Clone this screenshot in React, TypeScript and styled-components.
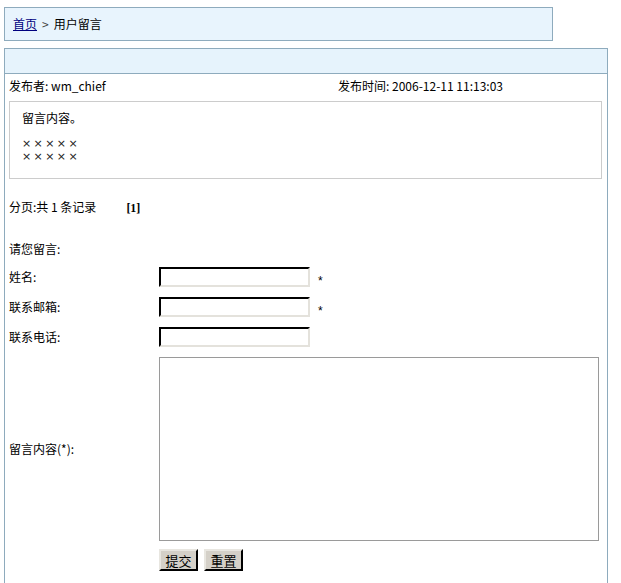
import React from 'react'
import styled, { createGlobalStyle } from 'styled-components'
// ______________________________________________________
//
const GlobalStyle = createGlobalStyle`
  body {
    margin: 0;
    background: #ffffff;
    font-family: "Noto Sans CJK SC", "Noto Sans", sans-serif;
    font-size: 12px;
    color: #000000;
  }
`
// ______________________________________________________
//
const Page = styled.div`
  padding: 7px 0 0 4px;
`

const Breadcrumb = styled.div`
  box-sizing: border-box;
  width: 549px;
  height: 34px;
  padding: 0 0 0 8px;
  display: flex;
  align-items: center;
  gap: 5px;
  background: #e8f4fd;
  border: 1px solid #8eabbd;
  line-height: 1;
`

const HomeLink = styled.a`
  color: #00007f;
  text-decoration: underline;
`

const Chevron = styled.span`
  color: #444444;
`

const Panel = styled.div`
  box-sizing: border-box;
  width: 604px;
  margin-top: 7px;
  border: 1px solid #8eabbd;
  border-bottom: none;
  min-height: 536px;
`

const PanelHead = styled.div`
  height: 24px;
  background: #e6f3fc;
  border-bottom: 1px solid #8eabbd;
`

const PanelBody = styled.div`
  padding: 0 4px;
`

const MetaRow = styled.div`
  display: grid;
  grid-template-columns: 329px 1fr;
  height: 22px;
  align-items: center;
`

const MessageBox = styled.div`
  box-sizing: border-box;
  width: 593px;
  height: 78px;
  margin-top: 5px;
  padding: 8px 12px;
  border: 1px solid #cccccc;
  line-height: 13px;
`

const MessageTitle = styled.div`
  margin-bottom: 13px;
  margin-top: 1px;
`

const Crosses = styled.div`
  font-family: "DejaVu Sans", sans-serif;
  font-size: 11px;
  line-height: 13px;
  letter-spacing: 2.4px;
  color: #222222;
`

const Pager = styled.div`
  margin-top: 21px;
  height: 14px;
  line-height: 14px;
  white-space: pre;
`

const PagerNum = styled.b`
  margin-left: 30px;
  font-family: "Liberation Serif", serif;
`

const Prompt = styled.div`
  margin-top: 28px;
  height: 14px;
  line-height: 14px;
`

const Form = styled.div`
  margin-top: 11px;
  display: grid;
  grid-template-columns: 150px 1fr;
  row-gap: 10px;
  align-items: center;
`

const Label = styled.div`
  line-height: 14px;
`

const Field = styled.div`
  display: flex;
  align-items: center;
  gap: 8px;
  min-height: 20px;
`

const TextInput = styled.input`
  box-sizing: border-box;
  width: 151px;
  height: 20px;
  margin: 0;
  border: 2px inset #e0ddd6;
  border-top-color: #4a4a4a;
  border-left-color: #4a4a4a;
  border-right-color: #e4e2dc;
  border-bottom-color: #e4e2dc;
  background: #ffffff;
`

const Star = styled.span`
  align-self: flex-end;
  font-family: "Liberation Sans", sans-serif;
  font-size: 12px;
  line-height: 11px;
`

const TextArea = styled.textarea`
  box-sizing: border-box;
  display: block;
  width: 440px;
  height: 184px;
  margin: 0;
  border: 1px solid #9a9a9a;
  resize: none;
  overflow-y: scroll;
  &::-webkit-scrollbar {
    width: 18px;
  }
  &::-webkit-scrollbar-track {
    background: #ececec;
  }
  &::-webkit-scrollbar-button:single-button {
    display: block;
    height: 18px;
    background: #f2f2f2;
    border: 1px solid #b8b8b8;
  }
`

const Buttons = styled.div`
  display: flex;
  gap: 6px;
  margin-top: 8px;
  padding-left: 150px;
`

const Button = styled.button<{ $w: number }>`
  box-sizing: border-box;
  height: 22px;
  width: ${(p) => p.$w}px;
  padding: 0;
  background: #d4d0c8;
  border: 2px outset #e8e6e0;
  border-right-color: #404040;
  border-bottom-color: #404040;
  font-family: "Noto Sans CJK SC", sans-serif;
  font-size: 13px;
  color: #000000;
`
// ______________________________________________________
//
const App: React.FC = () => (
  <Page>
    <GlobalStyle />
    <Breadcrumb>
      <HomeLink href="#">首页</HomeLink>
      <Chevron>&gt;</Chevron>
      <span>用户留言</span>
    </Breadcrumb>
    <Panel>
      <PanelHead />
      <PanelBody>
        <MetaRow>
          <span>发布者: wm_chief</span>
          <span>发布时间: 2006-12-11 11:13:03</span>
        </MetaRow>
        <MessageBox>
          <MessageTitle>留言内容。</MessageTitle>
          <Crosses>
            ×××××
            <br />
            ×××××
          </Crosses>
        </MessageBox>
        <Pager>
          分页:共 1 条记录
          <PagerNum>[1]</PagerNum>
        </Pager>
        <Prompt>请您留言:</Prompt>
        <Form>
          <Label>姓名:</Label>
          <Field>
            <TextInput />
            <Star>*</Star>
          </Field>
          <Label>联系邮箱:</Label>
          <Field>
            <TextInput />
            <Star>*</Star>
          </Field>
          <Label>联系电话:</Label>
          <Field>
            <TextInput />
          </Field>
          <Label>留言内容(*):</Label>
          <Field>
            <TextArea />
          </Field>
        </Form>
        <Buttons>
          <Button $w={39}>提交</Button>
          <Button $w={39}>重置</Button>
        </Buttons>
      </PanelBody>
    </Panel>
  </Page>
)
// ______________________________________________________
//
export default App
